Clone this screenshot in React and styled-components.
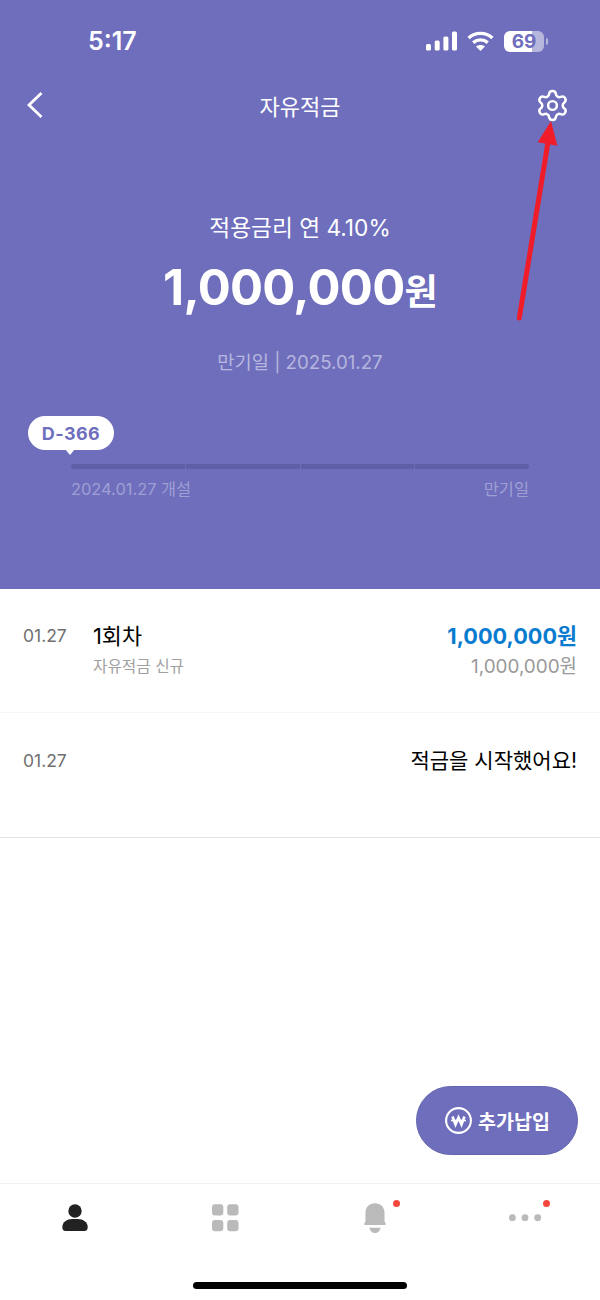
import styled, { createGlobalStyle } from 'styled-components';
import { Settings } from 'lucide-react';

const PURPLE = '#6e6ebd';

const GlobalStyle = createGlobalStyle`
  html, body {
    margin: 0;
    padding: 0;
    background: #fff;
  }
  * {
    box-sizing: border-box;
  }
`;

const Page = styled.div`
  position: relative;
  width: 600px;
  height: 1300px;
  display: flex;
  flex-direction: column;
  overflow: hidden;
  font-family: Inter, 'Noto Sans CJK KR', sans-serif;
  color: #000;
  background: #fff;
`;

const Hero = styled.section`
  height: 589px;
  flex: none;
  display: flex;
  flex-direction: column;
  background: ${PURPLE};
  color: #fff;
`;

const StatusBar = styled.div`
  height: 82px;
  display: flex;
  align-items: center;
  justify-content: space-between;
  padding: 0 52px 0 88px;
`;

const Time = styled.span`
  font-size: 25px;
  font-weight: 600;
`;

const StatusIcons = styled.div`
  display: flex;
  align-items: center;
  gap: 10px;
`;

const StatusGlyph = styled.svg`
  display: block;
`;

const Battery = styled.div`
  position: relative;
  width: 40px;
  height: 21px;
  margin-right: 4px;
  display: flex;
  align-items: center;
  justify-content: center;
  border-radius: 6px;
  font-size: 19px;
  font-weight: 700;
  color: ${PURPLE};
  background: linear-gradient(to right, #fff 28px, #b7b7de 28px);
`;

const BatteryNub = styled.i`
  position: absolute;
  right: -4px;
  top: 7px;
  width: 2px;
  height: 7px;
  border-radius: 0 2px 2px 0;
  background: #b7b7de;
`;

const Header = styled.header`
  height: 46px;
  display: grid;
  grid-template-columns: 1fr auto 1fr;
  align-items: center;
  padding: 0 30px;
`;

const BackIcon = styled.svg`
  display: block;
  margin-left: -4px;
`;

const Title = styled.h1`
  margin: 0;
  font-size: 22px;
  font-weight: 400;
`;

const GearWrap = styled.div`
  display: flex;
  justify-content: flex-end;
`;

const Summary = styled.div`
  margin-top: 83px;
  display: flex;
  flex-direction: column;
  align-items: center;
`;

const Rate = styled.div`
  font-size: 22.7px;
  line-height: 34px;
`;

const Amount = styled.div`
  margin-top: 13px;
  font-size: 49px;
  line-height: 60px;
  font-weight: 700;
  letter-spacing: -0.7px;
`;

const AmountUnit = styled.span`
  font-size: 36px;
`;

const Maturity = styled.div`
  margin-top: 27px;
  font-size: 18.7px;
  line-height: 28px;
  color: rgba(255, 255, 255, 0.5);
`;

const Progress = styled.div`
  position: relative;
  margin: 87px 71px 0;
`;

const DayBubble = styled.div`
  position: absolute;
  left: -43px;
  top: -48px;
  width: 86px;
  height: 34px;
  display: flex;
  align-items: center;
  justify-content: center;
  border-radius: 17px;
  background: #fff;
  color: ${PURPLE};
  font-size: 18px;
  font-weight: 700;
  letter-spacing: 0.4px;

  &::after {
    content: '';
    position: absolute;
    left: 37px;
    bottom: -5px;
    border-left: 5px solid transparent;
    border-right: 5px solid transparent;
    border-top: 6px solid #fff;
  }
`;

const Track = styled.div`
  display: grid;
  grid-template-columns: repeat(4, 1fr);
  gap: 1px;
  height: 5px;
  border-radius: 3px;
  overflow: hidden;
`;

const TrackSegment = styled.div`
  background: #5f5fa8;
`;

const TrackLabels = styled.div`
  margin-top: 9px;
  display: flex;
  justify-content: space-between;
  font-size: 16.4px;
  line-height: 22px;
  color: rgba(255, 255, 255, 0.35);
`;

const Row = styled.div`
  height: ${({ $height }) => $height}px;
  flex: none;
  display: flex;
  align-items: flex-start;
  padding: ${({ $top }) => $top}px 23px 0;
  border-bottom: 1px solid ${({ $line }) => $line};
`;

const RowDate = styled.div`
  width: 70px;
  font-size: 17.5px;
  line-height: 30px;
  color: #707070;
`;

const RowMain = styled.div`
  flex: 1;
`;

const RowTitle = styled.div`
  font-size: 21.8px;
  line-height: 30px;
`;

const RowSub = styled.div`
  margin-top: 1px;
  font-size: 15.7px;
  line-height: 30px;
  color: #a0a0a0;
`;

const RowAside = styled.div`
  text-align: right;
`;

const Paid = styled.div`
  font-size: 21.7px;
  line-height: 30px;
  font-weight: 700;
  color: #0a7ccf;
`;

const Balance = styled.div`
  margin-top: 1px;
  font-size: 18.9px;
  line-height: 30px;
  color: #999;
`;

const Message = styled.div`
  font-size: 21px;
  line-height: 30px;
`;

const Spacer = styled.div`
  flex: 1;
`;

const AddButton = styled.button`
  position: absolute;
  left: 416px;
  top: 1086px;
  width: 162px;
  height: 69px;
  display: flex;
  align-items: center;
  justify-content: center;
  gap: 5px;
  padding: 0;
  border: 1px solid #6464b0;
  border-radius: 35px;
  background: ${PURPLE};
  color: #fff;
  font-family: inherit;
  font-size: 19.5px;
  font-weight: 700;
`;

const TabBar = styled.nav`
  height: 117px;
  flex: none;
  display: grid;
  grid-template-columns: repeat(4, 1fr);
  border-top: 1px solid #f0f0f0;
`;

const Tab = styled.div`
  position: relative;
  display: flex;
  justify-content: center;
  padding-top: 17px;
`;

const TabDot = styled.i`
  position: absolute;
  left: 92.5px;
  top: 16px;
  width: 7px;
  height: 7px;
  border-radius: 50%;
  background: #f4473c;
`;

const HomeBar = styled.div`
  position: absolute;
  left: 193px;
  top: 1282px;
  width: 214px;
  height: 7px;
  border-radius: 4px;
  background: #000;
`;

const Arrow = styled.svg`
  position: absolute;
  left: 500px;
  top: 110px;
`;

const SignalIcon = () => (
  <StatusGlyph width="31" height="20" viewBox="0 0 31 20" fill="#fff">
    <rect x="0" y="13" width="5" height="6.5" rx="1.5" />
    <rect x="8.7" y="9.5" width="5" height="10" rx="1.5" />
    <rect x="17.4" y="5.5" width="5" height="14" rx="1.5" />
    <rect x="26" y="0.5" width="5" height="19" rx="1.5" />
  </StatusGlyph>
);

const WifiIcon = () => (
  <StatusGlyph width="27" height="20" viewBox="0 0 27 20" fill="none" stroke="#fff" strokeWidth="3.4">
    <path d="M1.6 7 C8.4 0.8 18.6 0.8 25.4 7" />
    <path d="M6.2 11.6 C10.4 8 16.6 8 20.8 11.6" />
    <path d="M13.5 20 L9 15.6 C11.6 13.6 15.4 13.6 18 15.6 Z" fill="#fff" stroke="none" />
  </StatusGlyph>
);

const WonIcon = () => (
  <svg width="29" height="29" viewBox="0 0 29 29" fill="none" stroke="#fff">
    <circle cx="14.5" cy="14.5" r="12.4" strokeWidth="2.1" />
    <path d="M8.5 10.5 L11.5 18.5 L14.5 11.5 L17.5 18.5 L20.5 10.5" strokeWidth="2.6" />
    <path d="M7 14.5 H22" strokeWidth="1.6" />
  </svg>
);

const PersonIcon = () => (
  <svg width="44" height="34" viewBox="0 0 44 34" fill="#222">
    <circle cx="22" cy="10" r="6.7" />
    <path d="M9.3 26 C9.3 21 14 18 19 18 H25 C30 18 34.7 21 34.7 26 C34.7 28.6 33.6 30 31.5 30 H12.5 C10.4 30 9.3 28.6 9.3 26 Z" />
  </svg>
);

const GridIcon = () => (
  <svg width="44" height="34" viewBox="0 0 44 34" fill="#bababa">
    <rect x="9" y="3.3" width="11.3" height="11.2" rx="3" />
    <rect x="24.2" y="3.3" width="11.3" height="11.2" rx="3" />
    <rect x="9" y="19" width="11.3" height="11.2" rx="3" />
    <rect x="24.2" y="19" width="11.3" height="11.2" rx="3" />
  </svg>
);

const BellIcon = () => (
  <svg width="44" height="34" viewBox="0 0 44 34" fill="#bababa">
    <path d="M12.5 12 C12.5 6 16.5 2.3 22 2.3 C27.5 2.3 31.5 6 31.5 12 V20 C31.5 21.4 32.8 21.6 32.8 23 C32.8 23.6 32.4 24 31.8 24 H12.2 C11.6 24 11.2 23.6 11.2 23 C11.2 21.6 12.5 21.4 12.5 20 Z" />
    <path d="M16.5 26.7 H27.5 C27 30 24.5 32 22 32 C19.5 32 17 30 16.5 26.7 Z" />
  </svg>
);

const MoreIcon = () => (
  <svg width="44" height="34" viewBox="0 0 44 34" fill="#bababa">
    <circle cx="9.4" cy="16.7" r="3.4" />
    <circle cx="22" cy="16.7" r="3.4" />
    <circle cx="34.7" cy="16.7" r="3.4" />
  </svg>
);

const App = () => (
  <Page>
    <GlobalStyle />
    <Hero>
      <StatusBar>
        <Time>5:17</Time>
        <StatusIcons>
          <SignalIcon />
          <WifiIcon />
          <Battery>
            69
            <BatteryNub />
          </Battery>
        </StatusIcons>
      </StatusBar>
      <Header>
        <BackIcon width="18" height="28" viewBox="0 0 18 28" fill="none" stroke="#fff" strokeWidth="2.8">
          <polyline points="15.5,2 3,14 15.5,26" />
        </BackIcon>
        <Title>자유적금</Title>
        <GearWrap>
          <Settings size={35} strokeWidth={1.7} color="#fff" />
        </GearWrap>
      </Header>
      <Summary>
        <Rate>적용금리 연 4.10%</Rate>
        <Amount>
          1,000,000<AmountUnit>원</AmountUnit>
        </Amount>
        <Maturity>만기일 | 2025.01.27</Maturity>
      </Summary>
      <Progress>
        <DayBubble>D-366</DayBubble>
        <Track>
          <TrackSegment />
          <TrackSegment />
          <TrackSegment />
          <TrackSegment />
        </Track>
        <TrackLabels>
          <span>2024.01.27 개설</span>
          <span>만기일</span>
        </TrackLabels>
      </Progress>
    </Hero>

    <Row $height={124} $top={32} $line="#f5f5f5">
      <RowDate>01.27</RowDate>
      <RowMain>
        <RowTitle>1회차</RowTitle>
        <RowSub>자유적금 신규</RowSub>
      </RowMain>
      <RowAside>
        <Paid>1,000,000원</Paid>
        <Balance>1,000,000원</Balance>
      </RowAside>
    </Row>
    <Row $height={125} $top={33} $line="#e4e4e4">
      <RowDate>01.27</RowDate>
      <RowMain />
      <Message>적금을 시작했어요!</Message>
    </Row>

    <Spacer />

    <TabBar>
      <Tab>
        <PersonIcon />
      </Tab>
      <Tab>
        <GridIcon />
      </Tab>
      <Tab>
        <BellIcon />
        <TabDot />
      </Tab>
      <Tab>
        <MoreIcon />
        <TabDot />
      </Tab>
    </TabBar>

    <AddButton>
      <WonIcon />
      추가납입
    </AddButton>
    <HomeBar />

    <Arrow width="70" height="220" viewBox="0 0 70 220" fill="#f01c2a">
      <path d="M19.3 208 L47.7 34" stroke="#f01c2a" strokeWidth="5" strokeLinecap="round" />
      <polygon points="51,11 37.7,32.3 57.3,35.7" />
    </Arrow>
  </Page>
);

export default App;
